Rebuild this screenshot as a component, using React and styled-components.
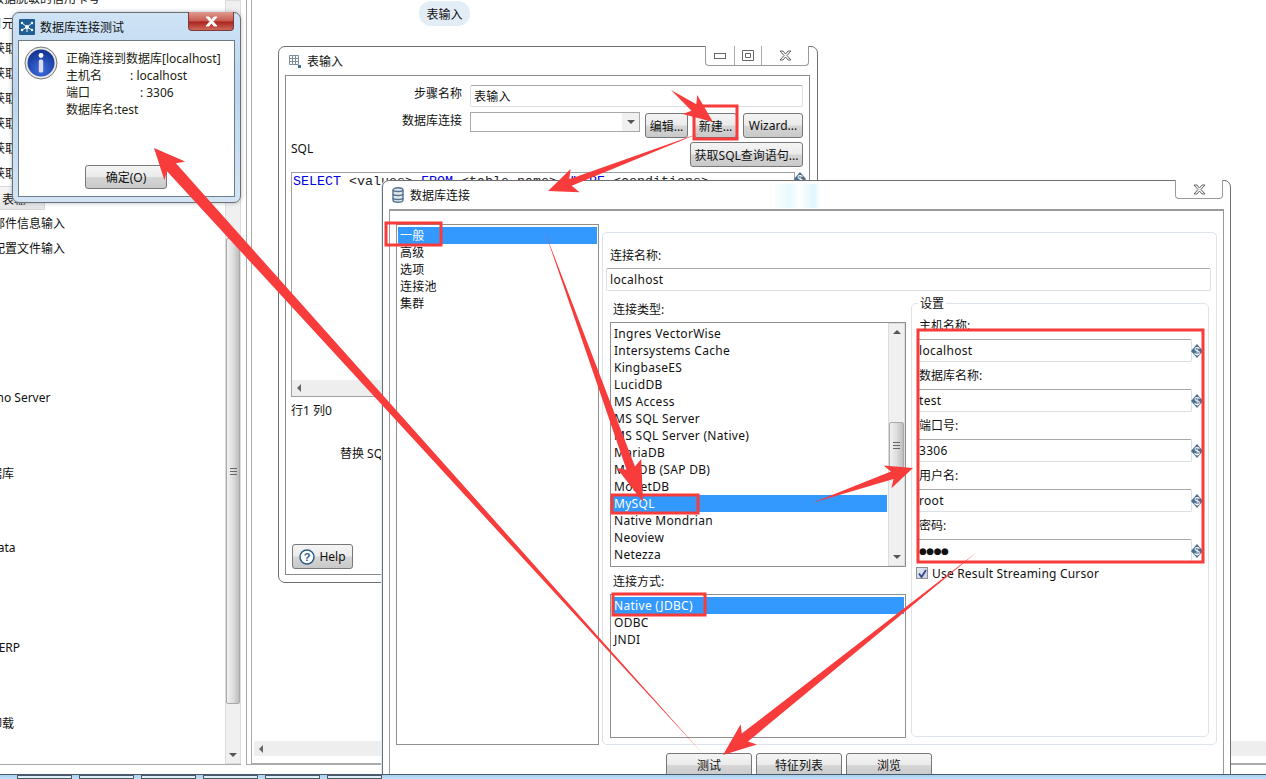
import React from "react";
import styled, { createGlobalStyle } from "styled-components";

const UI_FONT = `"Noto Sans", "Noto Sans CJK SC", sans-serif`;
const RED = "#f83b3b";

const GlobalStyle = createGlobalStyle`
  html, body { margin: 0; padding: 0; background: #fff; overflow: hidden; }
  * { box-sizing: border-box; }
`;

const PALETTE_ROWS = [
  { text: "数据脱敏的信用卡号", shift: -8 },
  { text: "日元", shift: -10 },
  { text: "获取", shift: -7 },
  { text: "获取", shift: -7 },
  { text: "获取", shift: -7 },
  { text: "获取", shift: -7 },
  { text: "获取", shift: -7 },
  { text: "获取", shift: -7 },
  { text: "表输", shift: -7, active: true },
  { text: "邮件信息输入", shift: -7 },
  { text: "配置文件输入", shift: -7 },
  {}, {}, {}, {}, {},
  { text: "Pentaho Server", shift: -36 },
  {}, {},
  { text: "数据库", shift: -22 },
  {}, {},
  { text: "Data", shift: -11 },
  {}, {}, {},
  { text: "SAP ERP", shift: -26 },
  {}, {},
  { text: "卸载", shift: -10 },
];

const DB_TYPES = [
  "Ingres VectorWise",
  "Intersystems Cache",
  "KingbaseES",
  "LucidDB",
  "MS Access",
  "MS SQL Server",
  "MS SQL Server (Native)",
  "MariaDB",
  "MaxDB (SAP DB)",
  "MonetDB",
  "MySQL",
  "Native Mondrian",
  "Neoview",
  "Netezza",
];

const SETTINGS = [
  { label: "主机名称:", value: "localhost" },
  { label: "数据库名称:", value: "test" },
  { label: "端口号:", value: "3306" },
  { label: "用户名:", value: "root" },
  { label: "密码:", value: "●●●●", secret: true },
];

const Desktop = styled.div`
  position: relative;
  display: flex;
  width: 1266px;
  height: 779px;
  overflow: hidden;
  background: #fff;
  font-family: ${UI_FONT};
  font-size: 12px;
  color: #111;
`;

const Palette = styled.aside`
  display: flex;
  width: 241px;
  height: 765px;
  border-bottom: 1px solid #a9a9a9;
`;

const PaletteList = styled.div`
  flex: 1;
  overflow: hidden;
  margin-top: -15px;
`;

const PaletteRow = styled.div`
  display: flex;
  align-items: center;
  height: 25px;
  white-space: nowrap;
  span {
    margin-left: ${(p) => p.$shift}px;
    padding-right: 6px;
    ${(p) =>
      p.$active &&
      `background: linear-gradient(#f7f7f7, #e4e4e4); border: 1px solid #d8d8d8; padding: 3px 18px 1px 8px;`}
  }
`;

const VScroll = styled.div`
  display: flex;
  flex-direction: column;
  width: ${(p) => p.$w || 16}px;
  background: #f0f0f0;
  border: 1px solid #dcdcdc;
`;

const ScrollArrow = styled.div`
  flex: none;
  display: flex;
  align-items: center;
  justify-content: center;
  height: ${(p) => p.$h || 16}px;
  &::after {
    content: "";
    border-left: 4px solid transparent;
    border-right: 4px solid transparent;
    ${(p) => (p.$up ? "border-bottom: 4px solid #555;" : "border-top: 4px solid #555;")}
  }
`;

const ScrollThumb = styled.div`
  flex: none;
  display: flex;
  align-items: center;
  justify-content: center;
  height: ${(p) => p.$h}px;
  margin-top: ${(p) => p.$top}px;
  border: 1px solid #a9a9a9;
  border-radius: 2px;
  background: linear-gradient(90deg, #f2f2f2, #dedede 50%, #bdbdbd);
  &::after {
    content: "";
    width: 7px;
    height: 7px;
    background: repeating-linear-gradient(#666 0 1px, transparent 1px 3px);
  }
`;

const Canvas = styled.main`
  flex: 1;
  height: 765px;
  margin-left: 5px;
  padding-left: 4px;
  display: flex;
  flex-direction: column;
  border-left: 1px solid #a9a9a9;
  border-bottom: 1px solid #a9a9a9;
`;

const CanvasInner = styled.div`
  flex: 1;
  display: flex;
  flex-direction: column;
  padding-left: 2px;
  padding-bottom: 7px;
  border-left: 1px solid #a9a9a9;
  border-bottom: 1px solid #a9a9a9;
`;

const StepNodeRow = styled.div`
  flex: 1;
  padding: 1px 0 0 165px;
`;

const StepNode = styled.div`
  display: flex;
  align-items: center;
  justify-content: center;
  width: 51px;
  height: 25px;
  border-radius: 12px;
  background: #e3edf5;
`;

const HScroll = styled.div`
  display: flex;
  align-items: center;
  height: ${(p) => p.$h || 15}px;
  padding-left: 5px;
  background: #eee;
  &::before {
    content: "";
    border-top: 4px solid transparent;
    border-bottom: 4px solid transparent;
    border-right: 4px solid #666;
  }
`;

const Taskbar = styled.footer`
  position: absolute;
  left: 0;
  right: 0;
  bottom: 0;
  height: 5px;
  display: flex;
  gap: 7px;
  padding-left: 17px;
  border-top: 1px solid #4a5a68;
  background: linear-gradient(#a9d0f0, #c3dff6);
  z-index: 5;
`;

const TaskTab = styled.div`
  width: 55px;
  background: #dff0f8;
  border: 1px solid #4a5a68;
`;

const WindowBase = styled.section`
  position: absolute;
  left: ${(p) => p.$x}px;
  top: ${(p) => p.$y}px;
  width: ${(p) => p.$w}px;
  height: ${(p) => p.$h}px;
  display: flex;
  flex-direction: column;
  border: 1px solid #6f6f6f;
  border-radius: 7px 7px 7px 7px;
  background: #fff;
`;

const MessageWindow = styled(WindowBase)`
  background: linear-gradient(#cfe3f6, #bcd6ee 40%, #d3e5f5);
  padding: 0 5px 5px;
  box-shadow: 0 0 4px rgba(60, 90, 120, 0.4);
  z-index: 3;
`;

const TitleBar = styled.header`
  position: relative;
  display: flex;
  align-items: center;
  gap: ${(p) => p.$gap ?? 6}px;
  flex: none;
  height: ${(p) => p.$h}px;
  padding-left: ${(p) => p.$pad}px;
`;

const CloseRed = styled.div`
  position: absolute;
  right: 1px;
  top: -1px;
  width: 46px;
  height: 19px;
  display: flex;
  align-items: center;
  justify-content: center;
  border: 1px solid #7a3a35;
  border-top: none;
  border-radius: 0 0 4px 4px;
  background: linear-gradient(#e09a90, #c85a50 50%, #a8241c 55%, #d0685c);
`;

const MessageBody = styled.div`
  flex: 1;
  display: flex;
  flex-direction: column;
  background: #fff;
  border: 1px solid #6e7c88;
`;

const MessageContent = styled.div`
  flex: 1;
  display: flex;
  gap: 8px;
  padding: 5px 5px 0 5px;
`;

const MessageLines = styled.div`
  padding-top: 4px;
  line-height: 17px;
  white-space: pre;
  color: #221;
`;

const DialogButton = styled.button`
  font: inherit;
  color: #111;
  padding: 0;
  flex: none;
  width: ${(p) => p.$w}px;
  height: ${(p) => p.$h || 25}px;
  margin: ${(p) => p.$margin || 0};
  border: 1px solid #777;
  border-radius: 3px;
  background: linear-gradient(#f4f4f4, #ebebeb 48%, #d6d6d6 52%, #c9c9c9);
  white-space: nowrap;
`;

const MessageActions = styled.div`
  display: flex;
  justify-content: flex-start;
  padding: 0 0 7px 66px;
`;

const ControlGroup = styled.div`
  position: absolute;
  top: -1px;
  right: 1px;
  display: flex;
  height: ${(p) => p.$h}px;
  border: 1px solid #9a9a9a;
  border-top: none;
  border-radius: 0 0 4px 4px;
  background: #fff;
`;

const ControlCell = styled.div`
  display: flex;
  align-items: center;
  justify-content: center;
  width: ${(p) => p.$w}px;
  & + & { border-left: 1px solid #a8a8a8; }
`;

const TableWindow = styled(WindowBase)`
  padding: 0 7px 7px 6px;
  z-index: 1;
`;

const TablePanel = styled.div`
  flex: 1;
  display: flex;
  flex-direction: column;
  border: 1px solid #8a8a8a;
  padding: 9px 6px 0 4px;
`;

const FormRow = styled.div`
  display: flex;
  align-items: flex-start;
  justify-content: ${(p) => p.$justify || "flex-start"};
  margin-top: ${(p) => p.$top || 0}px;
  margin-bottom: ${(p) => p.$gap || 0}px;
`;

const RightLabel = styled.label`
  width: 172px;
  margin-right: 8px;
  text-align: right;
  line-height: 18px;
`;

const TextBox = styled.div`
  display: flex;
  align-items: center;
  width: ${(p) => p.$w}px;
  height: ${(p) => p.$h || 22}px;
  margin-top: ${(p) => p.$top || 0}px;
  padding-left: ${(p) => p.$pad ?? 3}px;
  border: 1px solid #dbdfe4;
  border-top-color: #a8a8a8;
  border-radius: 2px;
  white-space: nowrap;
  letter-spacing: ${(p) => (p.$secret ? "-0.5px" : "0.3px")};
  ${(p) => p.$secret && "font-size: 9px; font-family: 'DejaVu Sans', sans-serif;"}
`;

const ComboBox = styled.div`
  display: flex;
  justify-content: flex-end;
  width: 170px;
  height: 20px;
  border: 1px solid #a8a8a8;
`;

const ComboArrow = styled.div`
  display: flex;
  align-items: center;
  justify-content: center;
  width: 17px;
  background: #f0f0f0;
  &::after {
    content: "";
    border-left: 4px solid transparent;
    border-right: 4px solid transparent;
    border-top: 4px solid #555;
  }
`;

const SqlLabel = styled.div`
  margin: -2px 0 0 1px;
  line-height: 17px;
`;

const EditorRow = styled.div`
  display: flex;
  margin-top: 5px;
  margin-left: 1px;
`;

const Editor = styled.div`
  flex: none;
  display: flex;
  flex-direction: column;
  width: 504px;
  height: 225px;
  border: 1px solid #a0a0a0;
`;

const EditorText = styled.pre`
  flex: 1;
  margin: 0;
  padding: 1px 1px;
  font-family: "Liberation Mono", monospace;
  font-size: 13.33px;
  line-height: 15px;
  color: #222;
  em { font-style: normal; color: #0000e6; }
`;

const StatusLine = styled.div`
  margin: 5px 0 0 1px;
  line-height: 17px;
`;

const ReplaceLine = styled.div`
  margin: 26px 0 0 50px;
  line-height: 17px;
  white-space: nowrap;
`;

const HelpButton = styled(DialogButton)`
  display: flex;
  align-items: center;
  justify-content: center;
  gap: 4px;
`;

const DbWindow = styled(WindowBase)`
  padding: 0 6px;
  box-shadow: -1px 0 0 #d5f0fb;
  z-index: 2;
`;

const TitleGlow = styled.div`
  position: absolute;
  left: 390px;
  top: 3px;
  width: 48px;
  height: 24px;
  background: linear-gradient(90deg, #fff, #e6f9fd 35%, #fff 55%, #dff6fc 85%, #fff);
`;

const DbBody = styled.div`
  flex: 1;
  display: flex;
  flex-direction: column;
  padding: 13px 0 0 6px;
  border: 1px solid #9a9a9a;
  border-top-width: 2px;
  border-bottom: none;
`;

const DbColumns = styled.div`
  display: flex;
  align-items: flex-start;
  gap: 3px;
`;

const NavList = styled.ul`
  list-style: none;
  margin: 0;
  padding: 2px 1px;
  width: 203px;
  height: 521px;
  border: 1px solid #8f8f8f;
`;

const ListItem = styled.li`
  height: 17px;
  line-height: 17px;
  padding-left: ${(p) => p.$pad}px;
  white-space: nowrap;
  letter-spacing: 0.3px;
  ${(p) => p.$selected && "background: #3399ff; color: #fff;"}
`;

const GeneralPanel = styled.div`
  width: 615px;
  height: 513px;
  margin-top: 8px;
  padding: 14px 5px 0 3px;
  border: 1px solid #dde3ea;
  border-radius: 5px;
`;

const FieldLabel = styled.div`
  height: 17px;
  line-height: 17px;
  padding-left: ${(p) => p.$pad || 0}px;
  white-space: nowrap;
`;

const ConnectionCols = styled.div`
  display: flex;
  align-items: flex-start;
  gap: 5px;
  margin-top: 10px;
  padding-left: 4px;
`;

const ListColumn = styled.div`
  display: flex;
  flex-direction: column;
  width: 296px;
`;

const ListBox = styled.div`
  display: flex;
  height: ${(p) => p.$h}px;
  margin: 4px 0 ${(p) => p.$after || 0}px;
  border: 1px solid #8f8f8f;
`;

const ListRows = styled.ul`
  flex: 1;
  list-style: none;
  margin: 0;
  padding: 2px 1px;
  overflow: hidden;
`;

const ScrollSpacer = styled.div`
  flex: 1;
`;

const SettingsGroup = styled.fieldset`
  position: relative;
  margin: 2px 0 0;
  padding: 13px 0 0 5px;
  width: 298px;
  height: 434px;
  border: 1px solid #dde3ea;
  border-radius: 5px;
`;

const GroupTitle = styled.span`
  position: absolute;
  left: 6px;
  top: -9px;
  padding: 0 2px;
  background: #fff;
  line-height: 17px;
`;

const SettingField = styled.div`
  margin-bottom: 5px;
`;

const SettingInput = styled.div`
  display: flex;
  align-items: center;
  margin-top: 5px;
`;

const CheckRow = styled.div`
  display: flex;
  align-items: center;
  gap: 4px;
  margin-left: -1px;
  height: 12px;
  letter-spacing: 0.2px;
  white-space: nowrap;
`;

const CheckBox = styled.div`
  display: flex;
  align-items: center;
  justify-content: center;
  width: 12px;
  height: 12px;
  border: 1px solid #8f8f8f;
  background: linear-gradient(135deg, #e4e8f2, #c9d0e2);
`;

const DbActions = styled.div`
  display: flex;
  gap: 4px;
  margin-top: 8px;
  padding-left: 270px;
`;

const Annotations = styled.svg`
  position: absolute;
  left: 0;
  top: 0;
  pointer-events: none;
  z-index: 4;
`;

const ARROWS = [
  { tail: [671, 90], tip: [713, 122], s: 8, l: 24, w: 24 },
  { tail: [700, 133], tip: [548, 191], s: 7, l: 24, w: 25 },
  { tail: [545, 232], tip: [643, 502], s: 9, l: 36, w: 26 },
  { tail: [812, 503], tip: [913, 468], s: 8, l: 22, w: 24 },
  { tail: [977, 552], tip: [723, 755], s: 10, l: 28, w: 26 },
  { tail: [703, 754], tip: [154, 148], s: 12, l: 26, w: 28 },
];

const RED_BOXES = [
  [694, 106, 43, 33],
  [386, 223, 55, 22],
  [612, 495, 86, 18],
  [613, 594, 92, 21],
  [918, 330, 285, 232],
];

// tapered arrow, a point at the tail growing to the head
function arrowPoints({ tail, tip, s, l, w }) {
  const dx = tip[0] - tail[0];
  const dy = tip[1] - tail[1];
  const len = Math.hypot(dx, dy);
  const ux = dx / len;
  const uy = dy / len;
  const nx = -uy;
  const ny = ux;
  const bx = tip[0] - ux * l;
  const by = tip[1] - uy * l;
  const pts = [
    tail,
    [bx + (nx * s) / 2, by + (ny * s) / 2],
    [bx - ux * 5 + (nx * w) / 2, by - uy * 5 + (ny * w) / 2],
    tip,
    [bx - ux * 5 - (nx * w) / 2, by - uy * 5 - (ny * w) / 2],
    [bx - (nx * s) / 2, by - (ny * s) / 2],
  ];
  return pts.map((p) => p.join(",")).join(" ");
}

function VarIcon() {
  return (
    <svg width="12" height="14" viewBox="0 0 12 14" style={{ flex: "none", marginLeft: -1 }}>
      <polygon points="6,0 12,7 6,14 0,7" fill="#4d6f8e" />
      <text x="6" y="10.5" fontSize="10" textAnchor="middle" fill="#fff" fontFamily="Liberation Sans">
        $
      </text>
    </svg>
  );
}

function InfoIcon() {
  return (
    <svg width="34" height="34" viewBox="0 0 34 34" style={{ flex: "none" }}>
      <defs>
        <radialGradient id="infoBlue" cx="0.5" cy="0.75" r="0.75">
          <stop offset="0" stopColor="#3f6fe0" />
          <stop offset="1" stopColor="#10308f" />
        </radialGradient>
      </defs>
      <circle cx="17" cy="17" r="16" fill="#e8e8e8" stroke="#777" />
      <circle cx="17" cy="17" r="13.5" fill="url(#infoBlue)" />
      <circle cx="17" cy="9.5" r="2.4" fill="#fff" />
      <rect x="14.8" y="13.5" width="4.4" height="13" rx="1.5" fill="#dde" />
    </svg>
  );
}

function KettleIcon() {
  return (
    <svg width="16" height="16" viewBox="0 0 16 16" style={{ flex: "none" }}>
      <rect width="16" height="16" rx="1" fill="#1f5f96" />
      <g stroke="#fff" strokeWidth="1">
        <path d="M8 8 3 4M8 8l5-4M8 8l-5 3M8 8l5 3M8 8v5" />
      </g>
      <circle cx="8" cy="8" r="2" fill="#fff" />
      <circle cx="3" cy="4" r="1.2" fill="#fff" />
      <circle cx="13" cy="4" r="1.2" fill="#fff" />
      <circle cx="3" cy="11" r="1.2" fill="#fff" />
      <circle cx="13" cy="11" r="1.2" fill="#fff" />
    </svg>
  );
}

function TableIcon() {
  return (
    <svg width="12" height="13" viewBox="0 0 12 13" style={{ flex: "none" }}>
      <path d="M.5.5h9v9h-9zM.5 3.5h9M.5 6.5h9M3.5.5v9M6.5.5v9" fill="none" stroke="#7f8c99" />
      <rect x="9" y="10" width="3" height="3" fill="#3f6f9a" />
    </svg>
  );
}

function DbIcon() {
  return (
    <svg width="12" height="16" viewBox="0 0 12 16" style={{ flex: "none" }}>
      <path
        d="M1 3c0-3 10-3 10 0v10c0 3-10 3-10 0z"
        fill="#dfe6ec"
        stroke="#55738e"
        strokeWidth="1.4"
      />
      <path d="M1 3c0 2 10 2 10 0M1 7c0 2 10 2 10 0M1 11c0 2 10 2 10 0" fill="none" stroke="#55738e" strokeWidth="1.4" />
    </svg>
  );
}

function CrossIcon({ color = "#666" }) {
  return (
    <svg width="13" height="11" viewBox="0 0 13 11">
      <path d="M1 1h3l2.500 3L9 1h3L8 5.500 12 10H9L6.500 7 4 10H1l4-4.500z" fill={color === "#fff" ? "#fff" : "#f4f4f4"} stroke={color} />
    </svg>
  );
}

function HelpIcon() {
  return (
    <svg width="16" height="16" viewBox="0 0 16 16">
      <circle cx="8" cy="8" r="7" fill="#fff" stroke="#2f5f8c" strokeWidth="1.5" />
      <text x="8" y="12" fontSize="11" textAnchor="middle" fill="#2f5f8c" fontFamily="Liberation Sans" fontWeight="bold">
        ?
      </text>
    </svg>
  );
}

export default function App() {
  return (
    <Desktop>
      <GlobalStyle />

      <Palette>
        <PaletteList>
          {PALETTE_ROWS.map((row, index) => (
            <PaletteRow key={index} $shift={row.shift} $active={row.active}>
              {row.text && <span>{row.text}</span>}
            </PaletteRow>
          ))}
        </PaletteList>
        <VScroll>
          <ScrollThumb $top={237} $h={466} />
          <ScrollSpacer />
          <ScrollArrow />
        </VScroll>
      </Palette>

      <Canvas>
        <CanvasInner>
          <StepNodeRow>
            <StepNode>表输入</StepNode>
          </StepNodeRow>
          <HScroll />
        </CanvasInner>
      </Canvas>

      <MessageWindow $x={12} $y={12} $w={229} $h={191}>
        <TitleBar $h={27} $pad={1} $gap={5}>
          <KettleIcon />
          数据库连接测试
          <CloseRed>
            <CrossIcon color="#fff" />
          </CloseRed>
        </TitleBar>
        <MessageBody>
          <MessageContent>
            <InfoIcon />
            <MessageLines>
              {"正确连接到数据库[localhost]\n主机名         : localhost\n端口                : 3306\n数据库名:test"}
            </MessageLines>
          </MessageContent>
          <MessageActions>
            <DialogButton $w={82} $h={24}>确定(O)</DialogButton>
          </MessageActions>
        </MessageBody>
      </MessageWindow>

      <TableWindow $x={278} $y={46} $w={540} $h={537}>
        <TitleBar $h={28} $pad={4}>
          <TableIcon />
          表输入
          <ControlGroup $h={20}>
            <ControlCell $w={28}>
              <svg width="12" height="6"><rect x=".5" y=".5" width="11" height="5" fill="#fff" stroke="#666" /></svg>
            </ControlCell>
            <ControlCell $w={27}>
              <svg width="12" height="11"><path d="M.5.5h11v10H.5zM3.500 3.500h5v4h-5z" fill="none" stroke="#666" /></svg>
            </ControlCell>
            <ControlCell $w={47}>
              <CrossIcon />
            </ControlCell>
          </ControlGroup>
        </TitleBar>
        <TablePanel>
          <FormRow $gap={5}>
            <RightLabel>步骤名称</RightLabel>
            <TextBox $w={333}>表输入</TextBox>
          </FormRow>
          <FormRow>
            <RightLabel>数据库连接</RightLabel>
            <ComboBox>
              <ComboArrow />
            </ComboBox>
            <DialogButton $w={43} $margin="1px 0 0 5px">编辑...</DialogButton>
            <DialogButton $w={43} $margin="1px 0 0 6px">新建...</DialogButton>
            <DialogButton $w={60} $margin="1px 0 0 6px">Wizard...</DialogButton>
          </FormRow>
          <FormRow $top={4} $justify="space-between">
            <SqlLabel>SQL</SqlLabel>
            <DialogButton $w={113}>获取SQL查询语句...</DialogButton>
          </FormRow>
          <EditorRow>
            <Editor>
              <EditorText>
                <em>SELECT</em> {"<values> "}<em>FROM</em> {"<table name> "}<em>WHERE</em>{" <conditions>"}
              </EditorText>
              <HScroll $h={16} />
            </Editor>
            <VarIcon />
          </EditorRow>
          <StatusLine>行1 列0</StatusLine>
          <ReplaceLine>替换 SQL 语句里的变量</ReplaceLine>
          <HelpButton $w={61} $h={25} $margin="82px 0 0 2px">
            <HelpIcon />
            Help
          </HelpButton>
        </TablePanel>
      </TableWindow>

      <DbWindow $x={382} $y={180} $w={849} $h={640}>
        <TitleGlow />
        <TitleBar $h={28} $pad={3}>
          <DbIcon />
          数据库连接
          <ControlGroup $h={19}>
            <ControlCell $w={46}>
              <CrossIcon />
            </ControlCell>
          </ControlGroup>
        </TitleBar>
        <DbBody>
          <DbColumns>
            <NavList>
              {["一般", "高级", "选项", "连接池", "集群"].map((item, index) => (
                <ListItem key={item} $pad={2} $selected={index === 0}>
                  {item}
                </ListItem>
              ))}
            </NavList>
            <GeneralPanel>
              <FieldLabel $pad={4}>连接名称:</FieldLabel>
              <TextBox $w={605} $h={23} $top={4}>localhost</TextBox>
              <ConnectionCols>
                <ListColumn>
                  <FieldLabel $pad={3}>连接类型:</FieldLabel>
                  <ListBox $h={245} $after={6}>
                    <ListRows>
                      {DB_TYPES.map((name) => (
                        <ListItem key={name} $pad={2} $selected={name === "MySQL"}>
                          {name}
                        </ListItem>
                      ))}
                    </ListRows>
                    <VScroll $w={17}>
                      <ScrollArrow $up />
                      <ScrollThumb $top={82} $h={47} />
                      <ScrollSpacer />
                      <ScrollArrow />
                    </VScroll>
                  </ListBox>
                  <FieldLabel $pad={3}>连接方式:</FieldLabel>
                  <ListBox $h={144}>
                    <ListRows>
                      {["Native (JDBC)", "ODBC", "JNDI"].map((name, index) => (
                        <ListItem key={name} $pad={2} $selected={index === 0}>
                          {name}
                        </ListItem>
                      ))}
                    </ListRows>
                  </ListBox>
                </ListColumn>
                <SettingsGroup>
                  <GroupTitle>设置</GroupTitle>
                  {SETTINGS.map((field) => (
                    <SettingField key={field.label}>
                      <FieldLabel $pad={2}>{field.label}</FieldLabel>
                      <SettingInput>
                        <TextBox $w={275} $h={23} $pad={1} $secret={field.secret}>
                          {field.value}
                        </TextBox>
                        <VarIcon />
                      </SettingInput>
                    </SettingField>
                  ))}
                  <CheckRow>
                    <CheckBox>
                      <svg width="9" height="9" viewBox="0 0 9 9">
                        <path d="M1 4.500 3.500 8 8 1" fill="none" stroke="#2d4a8c" strokeWidth="1.8" />
                      </svg>
                    </CheckBox>
                    Use Result Streaming Cursor
                  </CheckRow>
                </SettingsGroup>
              </ConnectionCols>
            </GeneralPanel>
          </DbColumns>
          <DbActions>
            <DialogButton $w={86} $h={24}>测试</DialogButton>
            <DialogButton $w={86} $h={24}>特征列表</DialogButton>
            <DialogButton $w={86} $h={24}>浏览</DialogButton>
          </DbActions>
        </DbBody>
      </DbWindow>

      <Annotations width="1266" height="779">
        {RED_BOXES.map(([x, y, w, h]) => (
          <rect key={`${x}-${y}`} x={x} y={y} width={w} height={h} fill="none" stroke={RED} strokeWidth="3" />
        ))}
        {ARROWS.map((arrow) => (
          <polygon key={arrow.tail.join()} points={arrowPoints(arrow)} fill={RED} />
        ))}
      </Annotations>

      <Taskbar>
        {[0, 1, 2, 3, 4, 5].map((i) => (
          <TaskTab key={i} />
        ))}
      </Taskbar>
    </Desktop>
  );
}
